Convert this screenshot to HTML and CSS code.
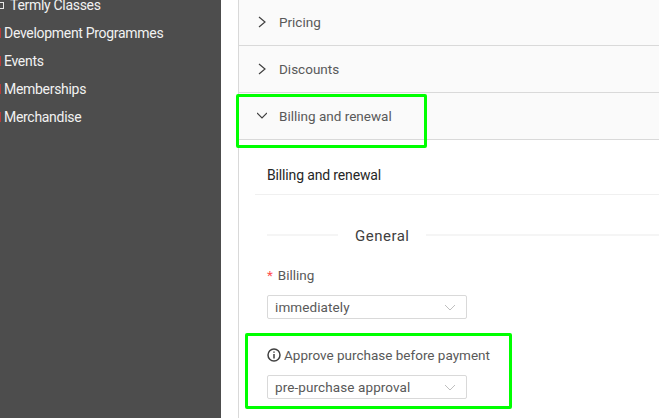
FILE: index.html
```html
<!DOCTYPE html>
<html lang="en">
<head>
<meta charset="utf-8">
<title>Billing and renewal</title>
<link rel="stylesheet" href="styles.css">
</head>
<body>
<div class="page">
  <nav class="sidebar">
    <div class="nav-item nav-first"><span class="mark mark-box"></span><span class="nav-indent">Termly Classes</span></div>
    <div class="nav-item"><span class="mark mark-red"></span>Development Programmes</div>
    <div class="nav-item"><span class="mark mark-red"></span>Events</div>
    <div class="nav-item"><span class="mark mark-red"></span>Memberships</div>
    <div class="nav-item"><span class="mark mark-red"></span>Merchandise</div>
  </nav>
  <main class="main">
    <div class="panel">
      <div class="panel-head">
        <svg class="arrow" viewBox="0 0 10 12"><path d="M2 1l6 5-6 5"/></svg>
        <span>Pricing</span>
      </div>
      <div class="panel-head">
        <svg class="arrow" viewBox="0 0 10 12"><path d="M2 1l6 5-6 5"/></svg>
        <span>Discounts</span>
      </div>
      <div class="panel-head">
        <svg class="arrow" viewBox="0 0 10 12"><path d="M0 3l5 5 5-5"/></svg>
        <span>Billing and renewal</span>
      </div>
      <div class="panel-body">
        <div class="form-title">Billing and renewal</div>
        <div class="divider">
          <span class="divider-line divider-left"></span>
          <span class="divider-text">General</span>
          <span class="divider-line divider-right"></span>
        </div>
        <div class="label"><span class="required">*</span>Billing</div>
        <div class="select">
          <span>immediately</span>
          <svg class="caret" viewBox="0 0 12 7"><path d="M1 1l5 5 5-5"/></svg>
        </div>
        <div class="label label-info">
          <svg class="info" viewBox="0 0 14 14"><circle cx="7" cy="7" r="6"/><path d="M7 6v4.500M7 3.500v1.200"/></svg>
          <span>Approve purchase before payment</span>
        </div>
        <div class="select">
          <span>pre-purchase approval</span>
          <svg class="caret" viewBox="0 0 12 7"><path d="M1 1l5 5 5-5"/></svg>
        </div>
      </div>
    </div>
  </main>
  <div class="highlight highlight-top"></div>
  <div class="highlight highlight-bottom"></div>
</div>
</body>
</html>
```
FILE: styles.css
```css
html, body {
  margin: 0;
  height: 100%;
  overflow: hidden;
}
.page {
  position: relative;
  display: flex;
  width: 659px;
  height: 418px;
  overflow: hidden;
  background: #fff;
  font-family: Roboto, "Liberation Sans", sans-serif;
  font-size: 14px;
}
.sidebar {
  width: 221px;
  flex: none;
  background: #4d4d4d;
  color: #f2f2f2;
  letter-spacing: -0.3px;
}
.nav-item {
  display: flex;
  align-items: center;
  height: 28px;
  line-height: 28px;
}
.nav-first {
  margin-top: -9px;
}
.mark {
  flex: none;
}
.mark-red {
  width: 1px;
  height: 10px;
  margin-right: 3px;
  background: #b53a3a;
}
.mark-box {
  width: 3px;
  height: 5px;
  border: 1px solid #e8e8e8;
  border-left: 0;
}
.nav-indent {
  margin-left: 6px;
}
.main {
  flex: 1;
  padding-left: 17px;
  min-width: 0;
}
.panel {
  border-left: 1px solid #d9d9d9;
  height: 100%;
}
.panel-head {
  display: flex;
  align-items: center;
  height: 46px;
  padding-left: 18px;
  border-bottom: 1px solid #d9d9d9;
  background: #fafafa;
  color: #595959;
  font-size: 13.500px;
}
.panel-head:first-child {
  height: 43px;
  padding-bottom: 2px;
}
.arrow {
  width: 10px;
  height: 12px;
  margin-right: 12px;
  fill: none;
  stroke: #404040;
  stroke-width: 1.200;
}
.panel-body {
  padding-left: 28px;
}
.form-title {
  height: 38px;
  padding-top: 16px;
  padding-left: 12px;
  margin-left: -12px;
  line-height: 39px;
  border-bottom: 1px solid #f0f0f0;
  color: #262626;
  font-size: 14px;
  letter-spacing: -0.15px;
}
.divider {
  display: flex;
  align-items: center;
  height: 24px;
  margin-top: 28px;
  margin-bottom: 18px;
  color: #404040;
  font-size: 15px;
}
.divider-line {
  height: 2px;
  background: #f5f5f5;
}
.divider-left {
  width: 71px;
  margin-right: 17px;
}
.divider-right {
  flex: 1;
  margin-left: 16px;
}
.divider-text {
  padding-top: 2px;
  letter-spacing: 0.5px;
}
.label {
  display: flex;
  align-items: center;
  height: 20px;
  margin-bottom: 10px;
  color: #595959;
  font-size: 13.500px;
}
.required {
  color: #ff4d4f;
  margin-right: 5px;
}
.label-info {
  margin-top: 26px;
}
.info {
  width: 14px;
  height: 14px;
  margin-right: 3px;
  fill: none;
  stroke: #404040;
  stroke-width: 1.500;
}
.select {
  box-sizing: border-box;
  display: flex;
  align-items: center;
  justify-content: space-between;
  width: 200px;
  height: 24px;
  padding: 0 10px 0 7px;
  border: 1px solid #d9d9d9;
  border-radius: 2px;
  background: #fff;
  color: #595959;
  font-size: 13.500px;
  letter-spacing: 0.1px;
}
.caret {
  width: 12px;
  height: 7px;
  fill: none;
  stroke: #bfbfbf;
  stroke-width: 1;
}
.highlight {
  position: absolute;
  box-sizing: border-box;
  border: 3px solid #00ff00;
  border-radius: 2px;
}
.highlight-top {
  left: 236px;
  top: 94px;
  width: 191px;
  height: 54px;
}
.highlight-bottom {
  left: 245px;
  top: 333px;
  width: 267px;
  height: 76px;
}
```
